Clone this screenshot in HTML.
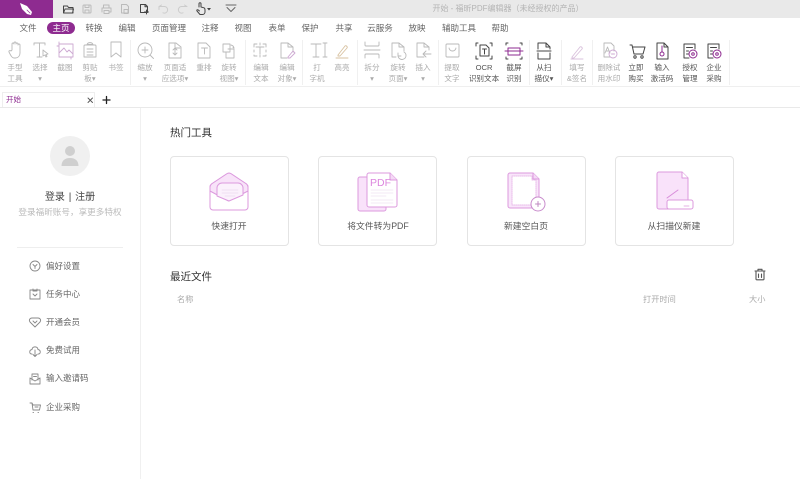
<!DOCTYPE html>
<html lang="zh"><head><meta charset="utf-8"><title>开始 - 福昕PDF编辑器</title>
<style>
html,body{margin:0;padding:0;background:#fff}
body{width:800px;height:479px;position:relative;overflow:hidden;font-family:"Liberation Sans","Noto Sans CJK SC",sans-serif;color:#555}
#w{position:absolute;left:0;top:0;width:800px;height:479px;overflow:hidden;background:#fff;filter:blur(.3px)}
.a{position:absolute;white-space:nowrap;line-height:1}
.c{transform:translateX(-50%)}
.m{font-size:8.5px;top:24px;color:#666}
.r{font-size:7.6px;color:#aaa;text-align:center;line-height:11px;transform:translateX(-50%);top:62px}
.d{color:#555}
.sep{position:absolute;top:40px;height:45px;width:1px;background:#f0f0f0}
.card{position:absolute;top:156px;width:117px;height:88px;border:1px solid #e4e4e4;border-radius:4px;box-sizing:content-box}
.cl{font-size:8.8px;top:222px;color:#555}
.s{font-size:8.5px;left:46px;color:#666}
svg{position:absolute;left:0;top:0}
</style></head><body><div id="w">
<div class="a" style="left:0;top:0;width:800px;height:18px;background:#e9e9e9"></div>
<div class="a" style="left:0;top:0;width:53px;height:18px;background:#8e2b90"></div>
<div class="a c" style="left:508px;top:5px;font-size:8px;color:#b4b4b4">开始 - 福昕PDF编辑器（未经授权的产品）</div>

<div class="a" style="left:47px;top:22px;width:28px;height:12px;border-radius:6px;background:#8e2b90"></div>
<div class="a m c" style="left:28px">文件</div>
<div class="a m c" style="left:61px;color:#fff">主页</div>
<div class="a m c" style="left:94px">转换</div>
<div class="a m c" style="left:127px">编辑</div>
<div class="a m c" style="left:169px">页面管理</div>
<div class="a m c" style="left:210px">注释</div>
<div class="a m c" style="left:243px">视图</div>
<div class="a m c" style="left:277px">表单</div>
<div class="a m c" style="left:310px">保护</div>
<div class="a m c" style="left:344px">共享</div>
<div class="a m c" style="left:380px">云服务</div>
<div class="a m c" style="left:417px">放映</div>
<div class="a m c" style="left:459px">辅助工具</div>
<div class="a m c" style="left:500px">帮助</div>

<div class="a r" style="left:15px">手型<br>工具</div>
<div class="a r" style="left:40px">选择<br>▾</div>
<div class="a r" style="left:65px">截图</div>
<div class="a r" style="left:90px">剪贴<br>板▾</div>
<div class="a r" style="left:116px">书签</div>
<div class="a r" style="left:145px">缩放<br>▾</div>
<div class="a r" style="left:175px">页面适<br>应选项▾</div>
<div class="a r" style="left:204px">重排</div>
<div class="a r" style="left:229px">旋转<br>视图▾</div>
<div class="a r" style="left:261px">编辑<br>文本</div>
<div class="a r" style="left:287px">编辑<br>对象▾</div>
<div class="a r" style="left:317px">打<br>字机</div>
<div class="a r" style="left:342px">高亮</div>
<div class="a r" style="left:372px">拆分<br>▾</div>
<div class="a r" style="left:398px">旋转<br>页面▾</div>
<div class="a r" style="left:423px">插入<br>▾</div>
<div class="a r" style="left:452px">提取<br>文字</div>
<div class="a r d" style="left:484px">OCR<br>识别文本</div>
<div class="a r d" style="left:514px">截屏<br>识别</div>
<div class="a r d" style="left:544px">从扫<br>描仪▾</div>
<div class="a r" style="left:577px">填写<br>&amp;签名</div>
<div class="a r" style="left:609px">删除试<br>用水印</div>
<div class="a r d" style="left:636px">立即<br>购买</div>
<div class="a r d" style="left:662px">输入<br>激活码</div>
<div class="a r d" style="left:690px">授权<br>管理</div>
<div class="a r d" style="left:714px">企业<br>采购</div>

<div class="sep" style="left:130px"></div><div class="sep" style="left:245px"></div><div class="sep" style="left:302px"></div><div class="sep" style="left:357px"></div><div class="sep" style="left:438px"></div><div class="sep" style="left:529px"></div><div class="sep" style="left:561px"></div><div class="sep" style="left:592px"></div><div class="sep" style="left:729px"></div>
<div class="a" style="left:0;top:86px;width:800px;height:1px;background:#efefef"></div>

<div class="a" style="left:2px;top:92px;width:93px;height:15px;border:1px solid #eee;border-bottom:0;box-sizing:border-box"></div>
<div class="a" style="left:6px;top:96px;font-size:7.5px;color:#8e2b90">开始</div>
<div class="a" style="left:0;top:107px;width:800px;height:1px;background:#e9e9e9"></div>
<div class="a" style="left:140px;top:108px;width:1px;height:371px;background:#f0f0f0"></div>

<div class="a c" style="left:70px;top:193px;font-size:10px;color:#444;word-spacing:1px">登录 | 注册</div>
<div class="a c" style="left:70px;top:208px;font-size:8.6px;color:#bbb">登录福昕账号，享更多特权</div>
<div class="a" style="left:17px;top:247px;width:106px;height:1px;background:#eee"></div>
<div class="a s" style="top:262px">偏好设置</div>
<div class="a s" style="top:290px">任务中心</div>
<div class="a s" style="top:318px">开通会员</div>
<div class="a s" style="top:346px">免费试用</div>
<div class="a s" style="top:374px">输入邀请码</div>
<div class="a s" style="top:403px">企业采购</div>

<div class="a" style="left:170px;top:128px;font-size:10.500px;color:#333">热门工具</div>
<div class="card" style="left:170px"></div><div class="card" style="left:318px"></div><div class="card" style="left:467px"></div><div class="card" style="left:615px"></div>
<div class="a cl c" style="left:229px">快速打开</div>
<div class="a cl c" style="left:378px">将文件转为PDF</div>
<div class="a cl c" style="left:526px">新建空白页</div>
<div class="a cl c" style="left:674px">从扫描仪新建</div>
<div class="a" style="left:170px;top:272px;font-size:10.500px;color:#333">最近文件</div>
<div class="a" style="left:177px;top:296px;font-size:8.2px;color:#aaa">名称</div>
<div class="a" style="left:643px;top:296px;font-size:8.2px;color:#aaa">打开时间</div>
<div class="a" style="left:749px;top:296px;font-size:8.2px;color:#aaa">大小</div>

<svg width="800" height="479" viewBox="0 0 800 479" fill="none" stroke-linejoin="round" stroke-linecap="round">
<!-- logo -->
<path d="M20 3l7 3 5 6-1 3-4-1-5-5z" fill="#fff"/><path d="M27 10l3 3" stroke="#8e2b90" stroke-width=".7"/>
<!-- quick access -->
<g stroke="#444" stroke-width="1">
<path d="M63.500 13V6h4l1 1.500h4.500V13zM63.500 13l1.500-4h8.500l-1 4z"/>
<g stroke="#bbb"><rect x="83" y="5" width="8" height="8" rx="1"/><path d="M85 5v2.500h4V5M85 13v-3h4v3"/>
<path d="M103.500 8V5h5.500v3M102 12V8h9v4h-2M104 10.500h5v3h-5z"/>
<path d="M121.500 4.500h5l2 2V13h-7zM124 9.500h4v4h-4z"/></g>
<path d="M140.500 4.500h5l2 2v6h-7zM145 4.500v2.300h2.300M146.500 10v4M144.500 12h4"/>
<path stroke="#ccc" d="M159 6.500v3M159 6.500h5.500a3.300 3.300 0 1 1-1.500 6.300M159 6.500l2.500-1.500M187 6.500h-5.500a3.300 3.300 0 1 0 1.500 6.300M187 6.500l-2.500-1.500"/>
<path d="M199 7V3.800a1 1 0 0 1 2 0V7l3 .8c1 .4 1 1.200 1 2.200v2a2.500 2.500 0 0 1-2.500 2.500h-2.500l-3-3.500c-.6-1 .5-1.800 1.500-.8l1 .8"/>
<path fill="#444" stroke="none" d="M207 8h4l-2 2.500z"/>
<path d="M226 5h10M227 7.500l4 4 4-4" stroke="#666"/>
</g>
<!-- tab controls -->
<path d="M88 98l4.500 4.500M92.500 98L88 102.500" stroke="#555" stroke-width=".9"/>
<path d="M106.500 96.500v7M103 100h7" stroke="#222" stroke-width="1.300"/>

<!-- ribbon light icons -->
<g stroke="#b9b9b9" stroke-width=".9">
<path d="M12 50v-6a1 1 0 0 1 2 0v-1a1 1 0 0 1 2 0v1a1 1 0 0 1 2 0v1a1 1 0 0 1 2 0v8c0 3-2 5-4.500 5H14c-2 0-3-2-5-6-.5-1.200 1-2 2-1z"/>
<path d="M34 45v-2h11v2M39.500 43v14M37 57h5M43 50l5 4-2 .5 1 2-1 .5-1-2-2 1z"/>
<path stroke="#cda8d2" d="M59 44h14v13H59zM59 53l5-5 3 4 2-2 4 4M57 46h2M59 44v-2M71 57v2"/>
<path d="M85 45h10a1 1 0 0 1 1 1v11H84V46a1 1 0 0 1 1-1zM87 44.500c1-2.500 5-2.500 6 0zM87 49h6M87 52h6M87 55h6"/>
<path d="M111 42h10v15l-5-4-5 4z"/>
<circle cx="145" cy="50" r="7"/><path d="M150 55l3.500 3.500M145 47v6M142 50h6"/>
<path d="M169 43h7l5 4v11h-12zM175 43v5h5M175 48v7M173 50l2-2 2 2M173 53l2 2 2-2"/>
<path d="M198 43h8l4 4v11h-12zM201.500 48h6M204.500 48v6"/>
<path d="M223 44h7v8h-7zM228 49h6v9h-8v-6M231 45a4 4 0 0 1 3 3M234 48l-1-.5"/>
<path d="M254 44h3M263 44h3M254 44v3M254 50v2M254 56h3M266 50v2M263 56h3M260 43v2M260 55v2M256 47h8M260 47v7M266 44v3M254 56v-1M266 56v-1"/>
<path d="M281 43h7l5 4v5M288 43v4h5M281 43v15h6"/><path stroke="#cda8d2" d="M288 57l5-6 2 2-5 5h-2z"/>
<path d="M311 44h10M316 44v13M313 57h6M325 43v14M323 43h4M323 57h4"/>
<path stroke="#d7c1a0" d="M338 55l7-9c1-1 3 1 2 2l-7 8h-2zM336 58h12"/>
<path d="M365 42v3a1 1 0 0 0 1 1h12a1 1 0 0 0 1-1v-3M365 58v-3a1 1 0 0 1 1-1h12a1 1 0 0 1 1 1v3M364 50h16"/>
<path d="M392 43h7l5 4v4M399 43v4h5M392 43v14h4M404 52a4 4 0 1 1-6 3.500M398 53v3h3" />
<path d="M417 43h7l5 4v3M424 43v4h5M417 43v14h7M423 54h8M426 51l-3 3 3 3"/>
<path d="M447 44h11a1 1 0 0 1 1 1v11a1 1 0 0 1-1 1h-11a1 1 0 0 1-1-1V45a1 1 0 0 1 1-1zM449 48c1 4 6 4 7 0"/>
<path stroke="#d9c1dc" d="M572 57l8-10c1-1 3 1 2 2l-8 9h-2zM571 59h12"/>
<path d="M604 43h7l3 3v5M604 43v14h6M605 53l2.500-6 2.500 6M606 51h3"/><circle cx="613" cy="54" r="4" stroke="#cda8d2"/><path d="M611.500 54h3" stroke="#cda8d2"/>
</g>
<!-- ribbon dark icons -->
<g stroke="#444" stroke-width="1">
<path d="M478 43h-2v3M490 43h2v3M476 56v3h2M492 56v3h-2M480 45h6l3 3v8h-9zM482.500 49h4M484.500 49v5"/>
<path d="M508 43h-2v2M520 43h2v2M506 57v2h2M522 57v2h-2"/><path stroke="#8e2b90" d="M505 51h18M508 48h12v7h-12z"/>
<path d="M538 49v-6h8l4 4v2M546 43v4h4M537 51h14M538 53v6h12v-6"/>
<path d="M630 45h2l2 9h9l2-7h-12"/><circle cx="635" cy="57" r="1.200"/><circle cx="642" cy="57" r="1.200"/>
<path d="M657 43h7l4 4v12h-11zM664 43v4h4"/><g stroke="#8e2b90"><circle cx="662" cy="54" r="2"/><path d="M662 46v6"/></g>
<path d="M684 44h11v5M684 44v14h5M686.500 47.500h6M686.500 51h2M686.500 54h2"/><g stroke="#8e2b90"><circle cx="693" cy="54" r="4"/><circle cx="693" cy="54" r="1.300"/></g>
<path d="M708 44h11v5M708 44v14h5M710.500 47.500h6M710.500 51h2M710.500 54h2"/><g stroke="#8e2b90"><circle cx="717" cy="54" r="4"/><circle cx="717" cy="54" r="1.300"/></g>
</g>

<!-- avatar -->
<circle cx="70" cy="156" r="20" fill="#f0f0f0"/>
<circle cx="70" cy="151" r="5" fill="#cfcfcf"/><path d="M61.500 166c0-5 3-8 8.500-8s8.500 3 8.500 8z" fill="#cfcfcf"/>

<!-- sidebar icons -->
<g stroke="#888" stroke-width=".9">
<circle cx="35" cy="266" r="5"/><path d="M33 264.500l2 2 2-2M35 266.500v2"/>
<path d="M30 290h10v9H30zM33 289v2h4v-2M33 294l2 2 2-2"/>
<path d="M35 327l-5-5c-1.500-2 0-4 2-4h6c2 0 3.500 2 2 4zM33 321l2 2 2-2"/>
<path d="M32 354c-3 0-3-4 0-4.500C32.500 346 37.500 346 38 349.500c3 .5 3 4.500 0 4.500M35 350v6.500M33 354.500l2 2 2-2"/>
<path d="M30 378v6h10v-6M32 380v-6h6v6M30 378l5 3 5-3M33.500 376.500h3"/>
<path d="M30 403h2l1 2h7.500l-1 5h-6.500l-1-7M33 412.500h.5M38 412.500h.5M35 407h3"/>
<path stroke="#555" stroke-width="1.100" d="M755 271h10M758 271v-1.700h4V271M756 271.500v7.500a.8.800 0 0 0 .8.800h6.400a.8.800 0 0 0 .8-.8v-7.500M758.500 274v3.500M761.500 274v3.500"/>
</g>

<!-- card 1 -->
<g stroke="#dc9ade" stroke-width="1">
<path d="M210 187c0-1 .5-2 1.500-3l15-10c1.500-1 3.500-1 5 0l15 10c1 1 1.500 2 1.500 3v20a3 3 0 0 1-3 3h-32a3 3 0 0 1-3-3z" fill="#fff"/>
<path d="M210 187c0-1 .5-2 1.500-3l15-10c1.500-1 3.500-1 5 0l15 10c1 1 1.500 2 1.500 3v4l-19.500 10-18.500-10z" fill="#f8e3f9"/>
<path d="M217 188a5 5 0 0 1 5-5h16a5 5 0 0 1 5 5v7l-14 6-12-5z" fill="#fbf1fc"/>
<path stroke="#ecd7ee" stroke-width=".7" d="M222 190h16M222 193h16M225 196h10"/>
</g>
<!-- card 2 -->
<g stroke="#dc9ade" stroke-width="1">
<rect x="358" y="177" width="28" height="34" rx="2" fill="#f9e2fa"/>
<path d="M369 173h21l7 7v25a2 2 0 0 1-2 2h-26a2 2 0 0 1-2-2v-30a2 2 0 0 1 2-2z" fill="#fff"/>
<path d="M390 173v7h7" fill="#f5d9f6"/>
<path stroke="#f0e3f1" stroke-width=".7" d="M371 190h22M371 193h22M371 196h15M371 200h22M371 203h22"/>
</g>
<text x="370" y="186" font-family="Liberation Sans" font-size="10.500" fill="#dc86de">PDF</text>
<!-- card 3 -->
<g stroke="#dc9ade" stroke-width="1">
<path d="M510 173h23l6 6v27a2 2 0 0 1-2 2h-27a2 2 0 0 1-2-2v-31a2 2 0 0 1 2-2z" fill="#f9e6fa"/>
<path d="M512 176h20v4h4v25h-24z" fill="#fff" stroke="#e9bcea" stroke-dasharray="1 1"/>
<path d="M533 173v6h6" fill="#f5d9f6"/>
<circle cx="538" cy="204" r="7" fill="#fff" stroke="#c98ccc"/>
<path d="M538 201.500v5M535.500 204h5" stroke="#bf88c2"/>
</g>
<!-- card 4 -->
<g stroke="#dc9ade" stroke-width="1">
<path d="M659 172h23l6 6v29a2 2 0 0 1-2 2h-27a2 2 0 0 1-2-2v-33a2 2 0 0 1 2-2z" fill="#f9e2fa"/>
<path d="M682 172v6h6" fill="#fff"/>
<path d="M667 198l11-8" stroke="#d88cda"/>
<rect x="667" y="200" width="26" height="9" rx="2" fill="#fff"/>
<path d="M684 206h5" stroke-width=".8"/>
</g>
</svg>
</div></body></html>
